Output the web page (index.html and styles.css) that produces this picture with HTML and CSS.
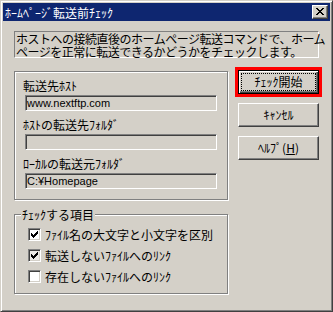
FILE: index.html
```html
<!DOCTYPE html>
<html lang="ja">
<head>
    <meta charset="UTF-8">
    <title>ﾎｰﾑﾍﾟｰｼﾞ転送前ﾁｪｯｸ</title>
    <link rel="stylesheet" href="styles.css">
</head>
<body>
    <div class="window">
        <!-- Title bar -->
        <div class="titlebar">
            <span class="title">ﾎｰﾑﾍﾟｰｼﾞ転送前ﾁｪｯｸ</span>
            <span class="close-btn">
                <svg width="8" height="7" viewBox="0 0 8 7"><path fill="#000" d="M0 0h2v1h-2z M6 0h2v1h-2z M1 1h2v1h-2z M5 1h2v1h-2z M2 2h4v1h-4z M3 3h2v1h-2z M2 4h4v1h-4z M1 5h2v1h-2z M5 5h2v1h-2z M0 6h2v1h-2z M6 6h2v1h-2z"/></svg>
            </span>
        </div>

        <div class="content">
            <p class="desc">ホストへの接続直後のホームページ転送コマンドで、ホーム<br>ページを正常に転送できるかどうかをチェックします。</p>

            <div class="columns">
                <div class="left">
                    <div class="group paths">
                        <div class="field">
                            <label>転送先ﾎｽﾄ</label>
                            <div class="edit">www.nextftp.com</div>
                        </div>
                        <div class="field">
                            <label>ﾎｽﾄの転送先ﾌｫﾙﾀﾞ</label>
                            <div class="edit"></div>
                        </div>
                        <div class="field">
                            <label>ﾛｰｶﾙの転送元ﾌｫﾙﾀﾞ</label>
                            <div class="edit">C:¥Homepage</div>
                        </div>
                    </div>

                    <div class="group checks">
                        <span class="legend">ﾁｪｯｸする項目</span>
                        <div class="check">
                            <span class="box"><svg width="11" height="11" viewBox="0 0 11 11"><path d="M8 2h1v1h-1z M7 3h2v1h-2z M2 4h1v1h-1z M6 4h3v1h-3z M2 5h2v1h-2z M5 5h3v1h-3z M2 6h5v1h-5z M3 7h3v1h-3z M4 8h1v1h-1z"/></svg></span>
                            <span>ﾌｧｲﾙ名の大文字と小文字を区別</span>
                        </div>
                        <div class="check">
                            <span class="box pressed"><svg width="11" height="11" viewBox="0 0 11 11"><path d="M8 2h1v1h-1z M7 3h2v1h-2z M2 4h1v1h-1z M6 4h3v1h-3z M2 5h2v1h-2z M5 5h3v1h-3z M2 6h5v1h-5z M3 7h3v1h-3z M4 8h1v1h-1z"/></svg></span>
                            <span>転送しないﾌｧｲﾙへのﾘﾝｸ</span>
                        </div>
                        <div class="check">
                            <span class="box"></span>
                            <span>存在しないﾌｧｲﾙへのﾘﾝｸ</span>
                        </div>
                    </div>
                </div>

                <div class="actions">
                    <button class="btn default"><span class="focus">ﾁｪｯｸ開始</span></button>
                    <button class="btn"><span class="focus">ｷｬﾝｾﾙ</span></button>
                    <button class="btn"><span class="focus">ﾍﾙﾌﾟ(<u>H</u>)</span></button>
                </div>
            </div>
        </div>
    </div>
</body>
</html>
```

FILE: styles.css
```css
/* Global */
body {
    margin: 0;
    background-color: #d4d0c8;
    font-family: "Noto Sans CJK JP", sans-serif;
    font-size: 12px;
    color: #000;
}

/* Window frame */
.window {
    width: 333px;
    height: 312px;
    box-sizing: border-box;
    padding: 2px;
    background-color: #d4d0c8;
    border: 1px solid;
    border-color: #d4d0c8 #404040 #404040 #d4d0c8;
    box-shadow: inset 1px 1px #fff, inset -1px -1px #808080;
}

/* Title bar */
.titlebar {
    height: 18px;
    padding: 0 2px 0 2px;
    background-color: #0e2670;
    color: #fff;
    display: flex;
    align-items: center;
    justify-content: space-between;
    line-height: 13px;
}

.close-btn {
    width: 16px;
    height: 14px;
    box-sizing: border-box;
    background-color: #d4d0c8;
    border: 1px solid;
    border-color: #fff #404040 #404040 #fff;
    box-shadow: inset -1px -1px #808080;
    display: flex;
    align-items: center;
    justify-content: center;
}

.close-btn svg {
    display: block;
    margin: 0 1px 1px 0;
}

/* Content */
.content {
    padding: 10px 11px 0;
}

.desc {
    margin: 0;
    height: 27px;
    box-sizing: border-box;
    padding-left: 1px;
    border: 1px solid;
    border-color: #808080 #fff #fff #808080;
    line-height: 13px;
    letter-spacing: -0.5px;
    white-space: nowrap;
}

.columns {
    display: flex;
    align-items: flex-start;
    margin-top: 12px;
}

.left {
    width: 215px;
    padding-top: 1px;
}

/* Etched group boxes */
.group {
    position: relative;
    width: 214px;
    box-sizing: border-box;
    border: 1px solid #808080;
    box-shadow: inset 1px 1px #fff, 1px 1px #fff;
}

.paths {
    height: 129px;
    padding: 7px 0 0 8px;
}

.field label {
    display: block;
    line-height: 13px;
}

.edit {
    width: 192px;
    height: 16px;
    box-sizing: border-box;
    margin: 3px 0 7px 2px;
    padding-left: 1px;
    border: 1px solid;
    border-color: #808080 #fff #fff #808080;
    box-shadow: inset 1px 1px #404040, inset -1px -1px #d4d0c8;
    font-family: "Liberation Sans", Arial, sans-serif;
    font-size: 11px;
    line-height: 14px;
}

.checks {
    margin-top: 14px;
    height: 80px;
    padding: 13px 0 0 13px;
}

.legend {
    position: absolute;
    top: -7px;
    left: 6px;
    padding: 0 1px;
    background-color: #d4d0c8;
    line-height: 13px;
}

.check {
    display: flex;
    align-items: center;
    gap: 4px;
    height: 13px;
    margin-bottom: 8px;
    line-height: 13px;
}

.box {
    width: 13px;
    height: 13px;
    box-sizing: border-box;
    background-color: #fff;
    border: 1px solid;
    border-color: #808080 #fff #fff #808080;
    box-shadow: inset 1px 1px #404040, inset -1px -1px #d4d0c8;
}

.box svg {
    display: block;
}

.box.pressed {
    background-color: #ebe9e5;
}

/* Buttons */
.actions {
    display: flex;
    flex-direction: column;
    gap: 9px;
    margin-left: 9px;
}

.btn {
    display: block;
    width: 81px;
    height: 24px;
    box-sizing: border-box;
    padding: 2px;
    margin: 0;
    background-color: #d4d0c8;
    border: 1px solid;
    border-color: #fff #404040 #404040 #fff;
    box-shadow: inset -1px -1px #808080;
    font-family: "Noto Sans CJK JP", sans-serif;
    font-size: 12px;
    color: #000;
}

.btn .focus {
    display: block;
    height: 18px;
    box-sizing: border-box;
    border: 1px solid transparent;
    line-height: 16px;
    text-align: center;
}

.btn.default {
    border-color: #000;
    box-shadow: inset 1px 1px #fff, inset -1px -1px #404040, inset -2px -2px #808080;
    outline: 3px solid #f00;
}

.btn.default .focus {
    border: 1px dotted #000;
}
```
